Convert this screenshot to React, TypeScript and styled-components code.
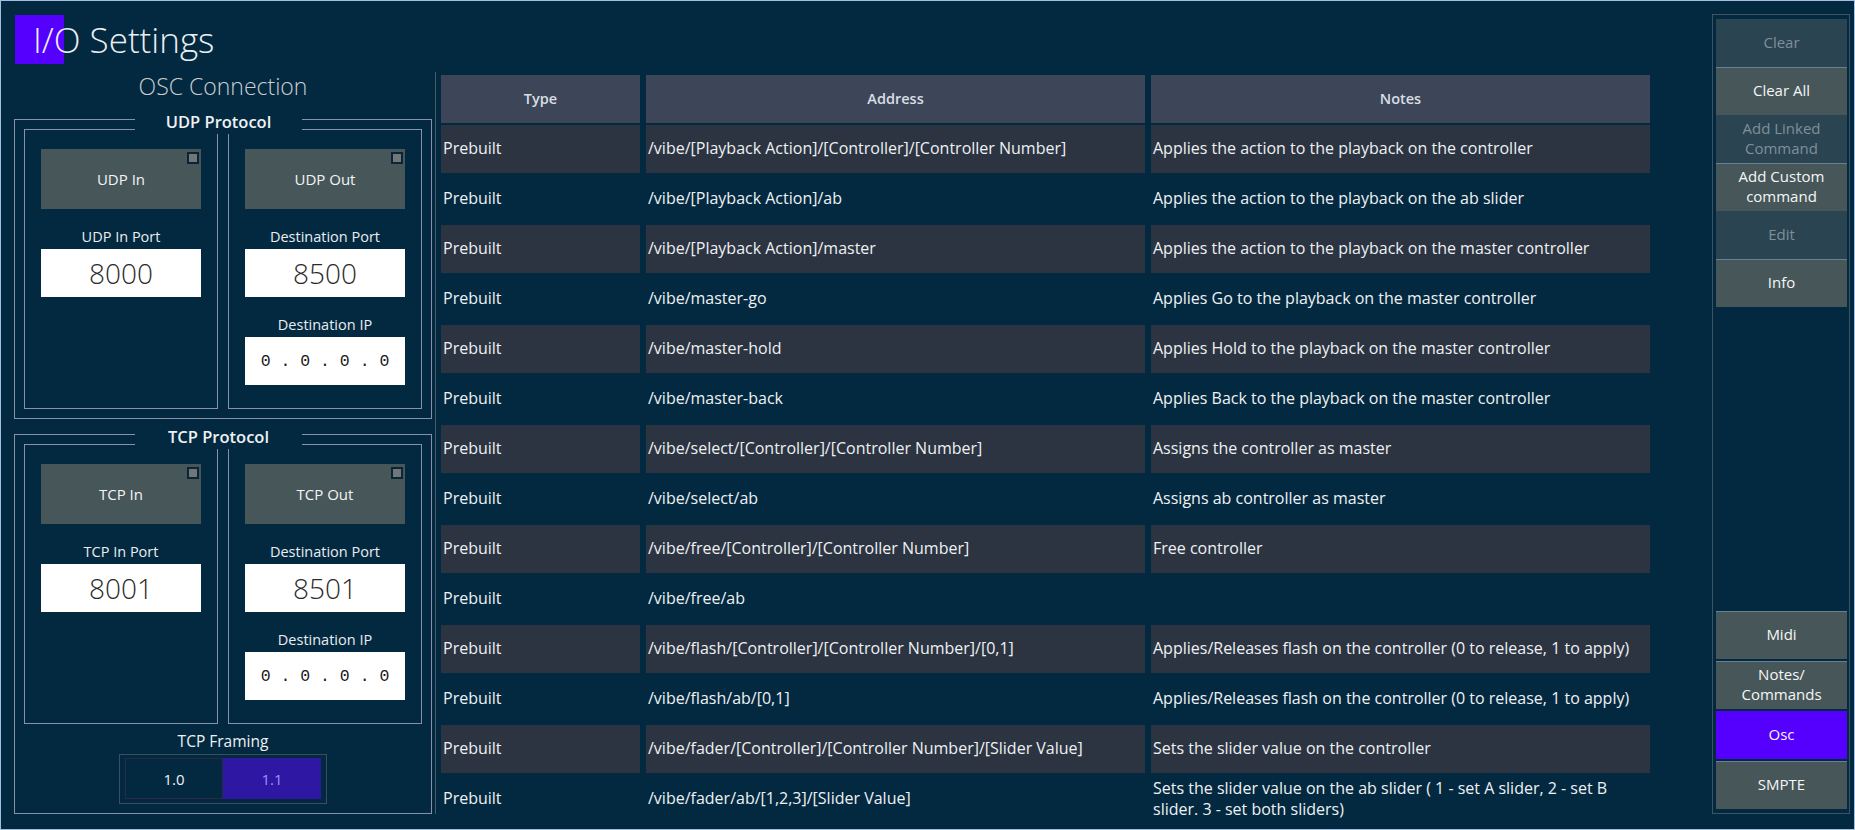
import React from "react";
import styled, { createGlobalStyle } from "styled-components";

const GlobalStyle = createGlobalStyle`
  html, body {
    margin: 0;
    padding: 0;
    background: #032940;
  }
  * {
    box-sizing: border-box;
  }
`;

const Window = styled.div`
  width: 1855px;
  height: 830px;
  border: 1px solid #a3bfe0;
  background: #032940;
  display: flex;
  overflow: hidden;
  font-family: "Open Sans", "Noto Sans", sans-serif;
  color: #eef1f3;
`;

const LeftPane = styled.div`
  width: 434px;
  padding-left: 13px;
  display: flex;
  flex-direction: column;
`;

const TitleRow = styled.div`
  position: relative;
  margin-top: 14px;
  height: 49px;
  padding-left: 19px;
  font-size: 35px;
  font-weight: 300;
  line-height: 49px;
  color: #eceff2;

  &::before {
    content: "";
    position: absolute;
    left: 1px;
    top: 0;
    width: 49px;
    height: 49px;
    background: #5500ff;
  }

  span {
    position: relative;
  }
`;

const OscSection = styled.div`
  margin-top: 8px;
  width: 422px;
  height: 742px;
  padding-right: 3px;
  border-right: 1px solid #4a5868;
  display: flex;
  flex-direction: column;
`;

const SectionTitle = styled.div`
  height: 28px;
  line-height: 28px;
  text-align: center;
  font-size: 23px;
  font-weight: 300;
  color: #c9ced3;
`;

const Group = styled.div<{ $top: number }>`
  position: relative;
  margin-top: ${({ $top }) => $top}px;
  border: 1px solid #8890aa;
  padding: 9px;
`;

const GroupLabel = styled.div`
  position: absolute;
  top: -7px;
  left: 120px;
  width: 167px;
  height: 21px;
  background: #032940;
  text-align: center;
  font-size: 16.5px;
  font-weight: 600;
  line-height: 18px;
  color: #eef1f3;
`;

const Columns = styled.div`
  display: grid;
  grid-template-columns: 194px 194px;
  column-gap: 10px;
`;

const Box = styled.div`
  height: 280px;
  border: 1px solid #8890aa;
  padding: 19px 16px 23px;
  display: flex;
  flex-direction: column;
`;

const ToggleButton = styled.div`
  position: relative;
  height: 60px;
  background: #475659;
  display: flex;
  align-items: center;
  justify-content: center;
  font-size: 15px;
  color: #f2f4f5;
`;

const Indicator = styled.span`
  position: absolute;
  top: 3px;
  right: 2px;
  width: 12px;
  height: 12px;
  border: 2px solid #0b2537;
  background: #70777b;
`;

const FieldLabel = styled.div`
  margin-top: 16px;
  height: 24px;
  line-height: 24px;
  text-align: center;
  font-size: 14.5px;
  color: #e9edf0;
`;

const PortInput = styled.div`
  height: 48px;
  background: #ffffff;
  display: flex;
  align-items: center;
  justify-content: center;
  font-size: 28px;
  font-weight: 300;
  color: #2b2b2b;
`;

const IpInput = styled(PortInput)`
  font-family: "Liberation Mono", "DejaVu Sans Mono", monospace;
  font-size: 16.5px;
  font-weight: 400;
  color: #1a1a1a;
  white-space: pre;
`;

const FramingLabel = styled.div`
  margin-top: 5px;
  height: 24px;
  line-height: 24px;
  text-align: center;
  font-size: 15.5px;
  color: #eef1f3;
`;

const Segmented = styled.div`
  margin: 1px auto 0;
  width: 208px;
  height: 50px;
  border: 1px solid #3f4d5b;
  padding: 3px 5px 4px;
  display: grid;
  grid-template-columns: 1fr 1fr;
`;

const Segment = styled.div<{ $active?: boolean }>`
  display: flex;
  align-items: center;
  justify-content: center;
  font-size: 15px;
  background: ${({ $active }) => ($active ? "#2d17a3" : "#032940")};
  color: ${({ $active }) => ($active ? "#a88cff" : "#eef1f3")};
  border: 1px solid ${({ $active }) => ($active ? "#2d17a3" : "#2a2a48")};
`;

const TableArea = styled.div`
  margin-top: 74px;
  margin-left: 1px;
  padding-left: 5px;
  width: 1215px;
  overflow: hidden;
`;

const Grid = styled.div`
  display: grid;
  grid-template-columns: 199px 499px 499px;
  grid-auto-rows: 48px;
  column-gap: 6px;
  row-gap: 2px;
`;

const HeaderCell = styled.div`
  background: #3c4658;
  display: flex;
  align-items: center;
  justify-content: center;
  padding-bottom: 1px;
  font-size: 14.5px;
  font-weight: 600;
  color: #d9dee4;
`;

const Cell = styled.div<{ $shaded: boolean }>`
  background: ${({ $shaded }) => ($shaded ? "#2c3441" : "transparent")};
  display: flex;
  align-items: center;
  padding: 0 4px 1px 2px;
  font-size: 16px;
  line-height: 21px;
  color: #eef1f3;
`;

const RightPane = styled.div`
  margin: 13px 0 0 61px;
  width: 138px;
  height: 800px;
  border: 1px solid #3e5466;
  padding: 4px 2px 4px 3px;
  display: flex;
  flex-direction: column;
  justify-content: space-between;
`;

const Stack = styled.div<{ $gap: number }>`
  display: flex;
  flex-direction: column;
  gap: ${({ $gap }) => $gap}px;
`;

const SideButton = styled.div<{ $variant: "on" | "off" | "active" }>`
  height: 48px;
  display: flex;
  align-items: center;
  justify-content: center;
  text-align: center;
  padding-bottom: 3px;
  font-size: 15px;
  line-height: 20px;
  background: ${({ $variant }) =>
    $variant === "active" ? "#5500ff" : $variant === "on" ? "#475659" : "#2b4452"};
  color: ${({ $variant }) => ($variant === "off" ? "#7e9099" : "#f4f6f7")};
  border-top: 1px solid
    ${({ $variant }) => ($variant === "on" ? "#687f8d" : "transparent")};
`;

const rows: [string, string, string][] = [
  ["Prebuilt", "/vibe/[Playback Action]/[Controller]/[Controller Number]", "Applies the action to the playback on the controller"],
  ["Prebuilt", "/vibe/[Playback Action]/ab", "Applies the action to the playback on the ab slider"],
  ["Prebuilt", "/vibe/[Playback Action]/master", "Applies the action to the playback on the master controller"],
  ["Prebuilt", "/vibe/master-go", "Applies Go to the playback on the master controller"],
  ["Prebuilt", "/vibe/master-hold", "Applies Hold to the playback on the master controller"],
  ["Prebuilt", "/vibe/master-back", "Applies Back to the playback on the master controller"],
  ["Prebuilt", "/vibe/select/[Controller]/[Controller Number]", "Assigns the controller as master"],
  ["Prebuilt", "/vibe/select/ab", "Assigns ab controller as master"],
  ["Prebuilt", "/vibe/free/[Controller]/[Controller Number]", "Free controller"],
  ["Prebuilt", "/vibe/free/ab", ""],
  ["Prebuilt", "/vibe/flash/[Controller]/[Controller Number]/[0,1]", "Applies/Releases flash on the controller (0 to release, 1 to apply)"],
  ["Prebuilt", "/vibe/flash/ab/[0,1]", "Applies/Releases flash on the controller (0 to release, 1 to apply)"],
  ["Prebuilt", "/vibe/fader/[Controller]/[Controller Number]/[Slider Value]", "Sets the slider value on the controller"],
  ["Prebuilt", "/vibe/fader/ab/[1,2,3]/[Slider Value]", "Sets the slider value on the ab slider ( 1 - set A slider, 2 - set B slider. 3 - set both sliders)"],
];

const IP = "0 . 0 . 0 . 0";

const ProtocolGroup: React.FC<{
  name: string;
  top: number;
  port: string;
  dest: string;
  children?: React.ReactNode;
}> = ({ name, top, port, dest, children }) => (
  <Group $top={top}>
    <GroupLabel>{name} Protocol</GroupLabel>
    <Columns>
      <Box>
        <ToggleButton>
          {name} In
          <Indicator />
        </ToggleButton>
        <FieldLabel>{name} In Port</FieldLabel>
        <PortInput>{port}</PortInput>
      </Box>
      <Box>
        <ToggleButton>
          {name} Out
          <Indicator />
        </ToggleButton>
        <FieldLabel>Destination Port</FieldLabel>
        <PortInput>{dest}</PortInput>
        <FieldLabel>Destination IP</FieldLabel>
        <IpInput>{IP}</IpInput>
      </Box>
    </Columns>
    {children}
  </Group>
);

const App: React.FC = () => (
  <>
    <GlobalStyle />
    <Window>
      <LeftPane>
        <TitleRow>
          <span>I/O Settings</span>
        </TitleRow>
        <OscSection>
          <SectionTitle>OSC Connection</SectionTitle>
          <ProtocolGroup name="UDP" top={19} port="8000" dest="8500" />
          <ProtocolGroup name="TCP" top={15} port="8001" dest="8501">
            <FramingLabel>TCP Framing</FramingLabel>
            <Segmented>
              <Segment>1.0</Segment>
              <Segment $active>1.1</Segment>
            </Segmented>
          </ProtocolGroup>
        </OscSection>
      </LeftPane>

      <TableArea>
        <Grid>
          <HeaderCell>Type</HeaderCell>
          <HeaderCell>Address</HeaderCell>
          <HeaderCell>Notes</HeaderCell>
          {rows.map((r, i) =>
            r.map((text, j) => (
              <Cell key={`${i}-${j}`} $shaded={i % 2 === 0}>
                {text}
              </Cell>
            ))
          )}
        </Grid>
      </TableArea>

      <RightPane>
        <Stack $gap={0}>
          <SideButton $variant="off">Clear</SideButton>
          <SideButton $variant="on">Clear All</SideButton>
          <SideButton $variant="off">
            Add Linked
            <br />
            Command
          </SideButton>
          <SideButton $variant="on">
            Add Custom
            <br />
            command
          </SideButton>
          <SideButton $variant="off">Edit</SideButton>
          <SideButton $variant="on">Info</SideButton>
        </Stack>
        <Stack $gap={2}>
          <SideButton $variant="on">Midi</SideButton>
          <SideButton $variant="on">
            Notes/
            <br />
            Commands
          </SideButton>
          <SideButton $variant="active">Osc</SideButton>
          <SideButton $variant="on">SMPTE</SideButton>
        </Stack>
      </RightPane>
    </Window>
  </>
);

export default App;
